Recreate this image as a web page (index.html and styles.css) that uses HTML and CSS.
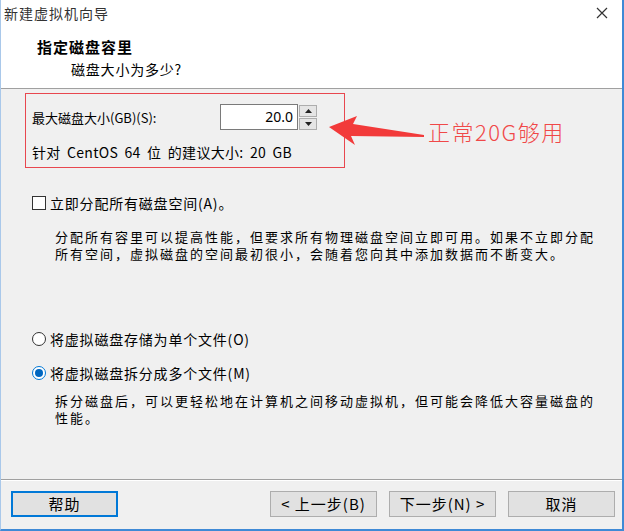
FILE: index.html
```html
<!DOCTYPE html>
<html lang="zh">
<head>
<meta charset="utf-8">
<link rel="stylesheet" href="styles.css">
</head>
<body>
<div class="window">
  <div class="titlebar">
    <span class="title">新建虚拟机向导</span>
    <svg class="close" width="12" height="12" viewBox="0 0 12 12"><path d="M1 1L11 11M11 1L1 11" stroke="#333" stroke-width="1.2"/></svg>
  </div>
  <div class="header">
    <div class="heading">指定磁盘容里</div>
    <div class="subheading">磁盘大小为多少?</div>
  </div>
  <div class="content">
    <div class="size-group">
      <div class="size-row">
        <span class="label">最大磁盘大小(GB)(S):</span>
        <div class="spin">
          <div class="spin-input">20.0</div>
          <div class="spin-btns">
            <div class="spin-btn"><svg width="7" height="4" viewBox="0 0 7 4"><path d="M0 4L3.5 0L7 4Z" fill="#222"/></svg></div>
            <div class="spin-btn"><svg width="7" height="4" viewBox="0 0 7 4"><path d="M0 0L3.5 4L7 0Z" fill="#222"/></svg></div>
          </div>
        </div>
      </div>
      <div class="hint">针对 CentOS 64 位 的建议大小: 20 GB</div>
    </div>

    <div class="check-row">
      <span class="checkbox"></span>
      <span>立即分配所有磁盘空间(A)。</span>
    </div>
    <div class="desc desc-alloc">
      <div class="desc-line">分配所有容里可以提高性能，但要求所有物理磁盘空间立即可用。如果不立即分配</div>
      <div class="desc-line">所有空间，虚拟磁盘的空间最初很小，会随着您向其中添加数据而不断变大。</div>
    </div>

    <div class="radio-row radio-first">
      <span class="radio"></span>
      <span>将虚拟磁盘存储为单个文件(O)</span>
    </div>
    <div class="radio-row radio-second">
      <span class="radio checked"></span>
      <span>将虚拟磁盘拆分成多个文件(M)</span>
    </div>
    <div class="desc desc-split">
      <div class="desc-line">拆分磁盘后，可以更轻松地在计算机之间移动虚拟机，但可能会降低大容量磁盘的</div>
      <div class="desc-line">性能。</div>
    </div>
  </div>
  <div class="footer">
    <button class="btn btn-help">帮助</button>
    <div class="nav">
      <button class="btn">&lt; 上一步(B)</button>
      <button class="btn">下一步(N) &gt;</button>
      <button class="btn btn-cancel">取消</button>
    </div>
  </div>

  <div class="annot-box"></div>
  <svg class="annot-arrow" width="100" height="40" viewBox="0 0 100 40">
    <path d="M2 15 L30 4 L26 12 L97 23 L97 25 L24 24 L28 33 Z" fill="#f23a3a"/>
  </svg>
  <div class="annot-text">正常20G够用</div>
</div>
</body>
</html>
```
FILE: styles.css
```css
* { box-sizing: border-box; }
html, body {
  margin: 0;
  padding: 0;
  width: 624px;
  height: 531px;
  overflow: hidden;
}
body {
  font-family: "Noto Sans", "Noto Sans CJK SC", sans-serif;
  font-size: 13px;
  color: #000;
}
.window {
  position: relative;
  width: 624px;
  height: 531px;
  background: #f0f0f0;
  border-left: 1px solid #a9c8ea;
  border-right: 2px solid #3f8ad6;
  border-bottom: 2px solid #3f8ad6;
  display: flex;
  flex-direction: column;
}
.titlebar {
  height: 25px;
  background: #fff;
  display: flex;
  align-items: center;
  justify-content: space-between;
  padding: 0 14px 0 3px;
}
.title {
  font-family: "Noto Sans CJK SC", sans-serif;
  font-size: 14px;
  letter-spacing: 1px;
  color: #333;
}
.header {
  background: #fff;
  height: 64px;
  padding: 12px 0 0 36px;
  border-bottom: 1px solid #a0a0a0;
  font-family: "Noto Sans CJK SC", sans-serif;
}
.heading {
  font-weight: bold;
  font-size: 15px;
  letter-spacing: 1px;
  line-height: 20px;
}
.subheading {
  font-size: 14px;
  letter-spacing: 0.8px;
  line-height: 20px;
  padding-left: 34px;
  margin-top: 2px;
}
.content {
  flex: 1;
  padding: 0 0 0 31px;
  font-family: "Noto Sans CJK SC", sans-serif;
}
.size-group {
  padding-top: 15px;
}
.size-row {
  display: flex;
  align-items: center;
  height: 26px;
  font-size: 13px;
}
.label {
  width: 188px;
}
.spin {
  display: flex;
  align-items: center;
}
.spin-input {
  width: 78px;
  height: 26px;
  border: 1px solid #7a7a7a;
  background: #fff;
  text-align: right;
  padding-right: 4px;
  font-family: "Noto Sans", sans-serif;
  font-size: 14px;
  line-height: 24px;
}
.spin-btns {
  display: flex;
  flex-direction: column;
  margin-left: 1px;
  gap: 1px;
}
.spin-btn {
  width: 18px;
  height: 12px;
  background: #e5e5e5;
  border: 1px solid #adadad;
  display: flex;
  align-items: center;
  justify-content: center;
}
.hint {
  margin-top: 13px;
  line-height: 18px;
  font-size: 14px;
  letter-spacing: 0.3px;
  word-spacing: 3px;
}
.check-row, .radio-row {
  display: flex;
  align-items: center;
  gap: 4px;
  line-height: 18px;
  font-size: 14px;
  letter-spacing: 0.8px;
}
.check-row {
  margin-top: 33px;
}
.checkbox {
  width: 14px;
  height: 14px;
  border: 1px solid #333;
  background: #fff;
}
.desc {
  padding-left: 23px;
  white-space: nowrap;
  font-family: "Liberation Sans", "Noto Sans CJK SC", sans-serif;
  font-size: 13px;
  letter-spacing: 2px;
  margin-top: 17px;
  display: flex;
  flex-direction: column;
}
.desc-line {
  height: 17px;
  line-height: 17px;
}
.radio-first {
  margin-top: 67px;
}
.radio-second {
  margin-top: 16px;
}
.radio {
  width: 14px;
  height: 14px;
  border-radius: 50%;
  border: 1px solid #333;
  background: #fff;
  position: relative;
}
.radio.checked {
  border-color: #0078d7;
}
.radio.checked::after {
  content: "";
  position: absolute;
  left: 2px;
  top: 2px;
  width: 8px;
  height: 8px;
  border-radius: 50%;
  background: #0066c0;
}
.desc-split {
  margin-top: 11px;
}
.footer {
  height: 50px;
  border-top: 1px solid #a0a0a0;
  box-shadow: inset 0 1px 0 #fff;
  display: flex;
  align-items: center;
  justify-content: space-between;
  padding: 0 7px 2px 10px;
}
.nav {
  display: flex;
  gap: 12px;
}
.btn {
  height: 26px;
  width: 107px;
  background: #e1e1e1;
  border: 1px solid #adadad;
  font-family: "Noto Sans CJK SC", sans-serif;
  font-size: 15px;
  letter-spacing: 1px;
  color: #000;
  padding: 0;
}
.btn-help {
  border: 2px solid #0078d7;
}
.annot-box {
  position: absolute;
  left: 24px;
  top: 93px;
  width: 320px;
  height: 75px;
  border: 1px solid #e8474f;
}
.annot-arrow {
  position: absolute;
  left: 326px;
  top: 112px;
}
.annot-text {
  position: absolute;
  left: 427px;
  top: 116px;
  font-family: "Noto Sans CJK SC", sans-serif;
  font-size: 22px;
  font-weight: 300;
  letter-spacing: 1.5px;
  color: #f04848;
  line-height: 30px;
}
```
